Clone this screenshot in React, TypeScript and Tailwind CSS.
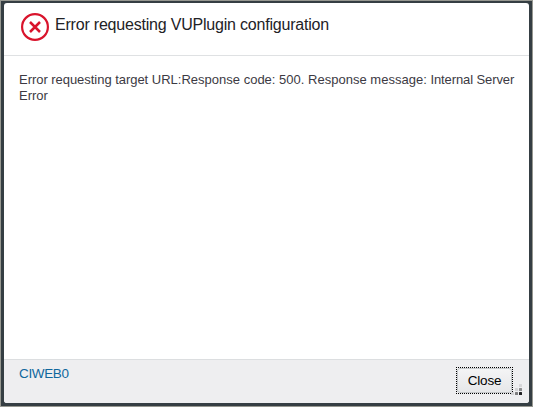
const dots = [
  { x: 5, y: 0, color: "#d6d6d8" },
  { x: 1, y: 4, color: "#d2d2d4" },
  { x: 5, y: 4, color: "#8c8c8e" },
  { x: -3, y: 8, color: "#d2d2d4" },
  { x: 1, y: 8, color: "#7c7c7e" },
  { x: 5, y: 8, color: "#202022" },
];

function ErrorIcon() {
  return (
    <svg width="28" height="28" viewBox="0 0 28 28" fill="none" stroke="#d9142c" aria-hidden="true">
      <circle cx="14" cy="14" r="12.9" strokeWidth="2.2" />
      <path d="M9 9L19 19M19 9L9 19" strokeWidth="2.5" />
    </svg>
  );
}

function ResizeGrip() {
  return (
    <svg className="absolute right-[7px] bottom-2 overflow-visible" width="8" height="11" viewBox="0 0 8 11" aria-hidden="true">
      {dots.map((d) => (
        <rect key={`${d.x}-${d.y}`} x={d.x} y={d.y} width="3" height="3" rx="0.6" fill={d.color} />
      ))}
    </svg>
  );
}

export default function App() {
  return (
    <div className="h-[407px] w-[533px] border border-[#979891] bg-[#353e43] pt-0.5 pr-[3px] pb-[3px] pl-[3px] font-['Liberation_Sans',Arial,sans-serif]">
      <section role="dialog" aria-labelledby="title" className="relative flex h-[400px] w-[525px] flex-col overflow-hidden rounded-[3px] bg-white">
        <header className="flex h-[53px] shrink-0 border-b border-[#dfe1e3] pt-2.5 pl-[17px]">
          <ErrorIcon />
          <h1 id="title" className="ml-1.5 whitespace-nowrap text-base leading-[23px] tracking-[-0.205px] text-[#222226]">
            Error requesting VUPlugin configuration
          </h1>
        </header>
        <main className="flex-1 pt-4 pl-[15px] text-[13px] leading-4 tracking-[-0.04px] whitespace-nowrap text-[#3c3a43]">
          <p>
            Error requesting target{" "}
            <span className="tracking-[0.01px]">URL:Response code: 500. Response message: </span>
            <span className="tracking-[-0.1px]">Internal Server</span>
            <br />
            Error
          </p>
        </main>
        <footer className="flex h-[44px] shrink-0 justify-between border-t border-[#dcdee0] bg-[#eeeef0] pr-4 pl-[15px]">
          <a className="pt-[5px] text-[13.5px] leading-[18px] tracking-[-0.35px] text-[#10679d]">CIWEB0</a>
          <button className="mt-[7px] h-[27px] w-[57px] border border-dotted border-black">
            <span className="flex h-full w-full items-center justify-center rounded-[3px] border border-[#c4c7ca] bg-gradient-to-b from-[#f4f4f5] to-[#e6e7e9] pt-0.5 text-[13.5px] tracking-[-0.2px] text-black">
              Close
            </span>
          </button>
        </footer>
        <ResizeGrip />
      </section>
    </div>
  );
}
